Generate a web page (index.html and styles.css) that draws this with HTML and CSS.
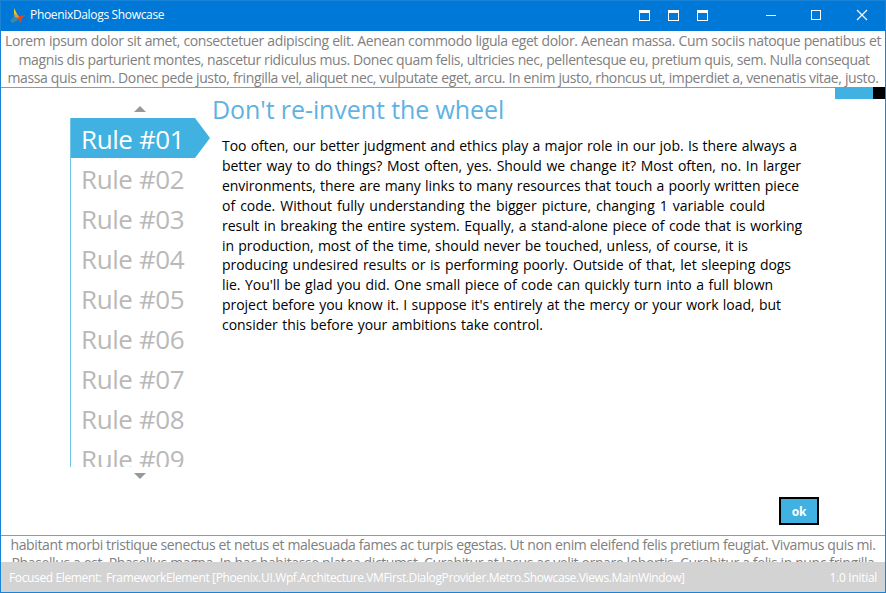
FILE: index.html
```html
<!DOCTYPE html>
<html lang="en">
<head>
<meta charset="utf-8">
<title>PhoenixDalogs Showcase</title>
<link rel="stylesheet" href="styles.css">
</head>
<body>
<div class="window">
  <header class="titlebar">
    <svg class="logo" width="18" height="18" viewBox="0 0 18 18">
      <path d="M5 1 L8 7 L9 10 L5 8 Z" fill="#f0cf2a"/>
      <path d="M7 8 L11 9 L17 8 L13 11 L12 16 L9 12 Z" fill="#e0452a"/>
      <path d="M5 7 L9 10 L8 14 L3 16 L1 13 L4 11 Z" fill="#4f8f96" opacity=".75"/>
      <path d="M5 6 L9 8 L10 11 L6 10 Z" fill="#d5a33a"/>
    </svg>
    <span class="title">PhoenixDalogs Showcase</span>
    <svg class="controls" width="250" height="30" viewBox="0 0 250 30" fill="none" stroke="#fff" shape-rendering="crispEdges">
      <path d="M3.500 9.500h10v10h-10zM32.500 9.500h10v10h-10zM61.500 9.500h10v10h-10z"/>
      <path d="M3 11h11M32 11h11M61 11h11" stroke-width="2"/>
      <path d="M130 14.500h10M175.500 9.500h9v9h-9z"/>
      <path d="M221 9l10 10M231 9l-10 10" shape-rendering="auto" stroke-width="1.200"/>
    </svg>
  </header>
  <div class="backdrop top">
    <p style="width:876px">Lorem ipsum dolor sit amet, consectetuer adipiscing elit. Aenean commodo ligula eget dolor. Aenean massa. Cum sociis natoque penatibus et</p>
    <p style="width:849px">magnis dis parturient montes, nascetur ridiculus mus. Donec quam felis, ultricies nec, pellentesque eu, pretium quis, sem. Nulla consequat</p>
    <p style="width:871px">massa quis enim. Donec pede justo, fringilla vel, aliquet nec, vulputate eget, arcu. In enim justo, rhoncus ut, imperdiet a, venenatis vitae, justo.</p>
  </div>
  <main class="dialog">
    <div class="progress"><i></i></div>
    <nav class="rules">
      <span class="arrow up"></span>
      <ul>
        <li class="active">Rule #01</li>
        <li>Rule #02</li>
        <li>Rule #03</li>
        <li>Rule #04</li>
        <li>Rule #05</li>
        <li>Rule #06</li>
        <li>Rule #07</li>
        <li>Rule #08</li>
        <li>Rule #09</li>
      </ul>
      <span class="arrow down"></span>
    </nav>
    <section class="content">
      <h1>Don't re-invent the wheel</h1>
      <div class="text">
        <p style="width:575px">Too often, our better judgment and ethics play a major role in our job. Is there always a</p>
        <p style="width:579px">better way to do things? Most often, yes. Should we change it? Most often, no. In larger</p>
        <p style="width:577px">environments, there are many links to many resources that touch a poorly written piece</p>
        <p style="width:543px">of code. Without fully understanding the bigger picture, changing 1 variable could</p>
        <p style="width:580px">result in breaking the entire system. Equally, a stand-alone piece of code that is working</p>
        <p style="width:526px">in production, most of the time, should never be touched, unless, of course, it is</p>
        <p style="width:569px">producing undesired results or is performing poorly. Outside of that, let sleeping dogs</p>
        <p style="width:551px">lie. You'll be glad you did. One small piece of code can quickly turn into a full blown</p>
        <p style="width:559px">project before you know it. I suppose it's entirely at the mercy or your work load, but</p>
        <p style="width:321px">consider this before your ambitions take control.</p>
      </div>
      <button class="ok">ok</button>
    </section>
  </main>
  <div class="backdrop bottom">
    <p style="width:865px">habitant morbi tristique senectus et netus et malesuada fames ac turpis egestas. Ut non enim eleifend felis pretium feugiat. Vivamus quis mi.</p>
    <p style="width:863px">Phasellus a est. Phasellus magna. In hac habitasse platea dictumst. Curabitur at lacus ac velit ornare lobortis. Curabitur a felis in nunc fringilla</p>
  </div>
  <footer class="status">
    <span class="label">Focused Element:</span>
    <span class="focus">FrameworkElement [Phoenix.UI.Wpf.Architecture.VMFirst.DialogProvider.Metro.Showcase.Views.MainWindow]</span>
    <span class="version">1.0 Initial</span>
  </footer>
</div>
</body>
</html>
```
FILE: styles.css
```css
* { box-sizing: border-box; }
body { margin: 0; font-family: "Open Sans", "Noto Sans", sans-serif; }
p, h1, ul { margin: 0; padding: 0; }
.window {
  width: 886px; height: 593px; overflow: hidden;
  display: flex; flex-direction: column;
  background: #fff; border: 1px solid #1883d7;
}
.titlebar {
  height: 30px; flex: none; display: flex; align-items: center;
  background: #0078d7; color: #fff; padding-left: 8px;
}
.logo { margin-right: 3px; }
.title { font-size: 12px; line-height: 16px; padding-bottom: 2px; letter-spacing: -0.33px; white-space: nowrap; }
.controls { margin-left: auto; margin-right: -1px; }
.backdrop {
  display: flex; flex-direction: column; align-items: center;
  color: #808080; font-size: 14px; letter-spacing: -0.38px;
  overflow: hidden; flex: none;
}
.backdrop p { line-height: 18.6px; white-space: nowrap; text-align-last: justify; }
.top { height: 56px; padding-top: 1px; }
.bottom { height: 26px; }
.bottom p { line-height: 18px; }
.dialog {
  flex: none; height: 449px; position: relative; display: flex;
  border-top: 1px solid #4db0e0; border-bottom: 1px solid #4db0e0;
}
.progress {
  position: absolute; top: -1px; right: 0; width: 50px; height: 12px;
  background: #41b1e1;
}
.progress i { display: block; width: 12px; height: 12px; margin-left: 38px; background: #000; }
.rules { width: 140px; margin-left: 69px; padding-top: 18px; flex: none; }
.arrow { display: block; width: 0; margin-left: 64px; border: 6px solid transparent; }
.up { border-top: 0; border-bottom-color: #999; }
.down { border-bottom: 0; border-top-color: #999; margin-top: 6px; }
.rules ul {
  list-style: none; height: 349px; overflow: hidden; margin-top: 6px;
  border-left: 1px solid #6fc4e8;
}
.rules li {
  height: 40px; line-height: 42px; padding-left: 10px; font-size: 26px;
  letter-spacing: -0.4px; color: #b9b9b9; white-space: nowrap;
}
.rules .active {
  color: #fff; background: #41b1e1;
  clip-path: polygon(0 0, 124px 0, 100% 50%, 124px 100%, 0 100%);
}
.content { flex: 1; padding-left: 2px; display: flex; flex-direction: column; }
h1 {
  height: 48px; line-height: 42px; font-size: 25px; font-weight: 400;
  letter-spacing: -0.09px; color: #5fb2e2;
}
.text { padding-left: 10px; font-size: 14px; letter-spacing: -0.04px; color: #000; }
.text p { line-height: 19.9px; white-space: nowrap; text-align-last: justify; }
.ok {
  width: 40px; height: 28px; margin: auto 66px 10px auto; padding: 0;
  border: 2px solid #000; background: #41b1e1; color: #fff;
  font: 700 12px "Open Sans", sans-serif; letter-spacing: -0.3px;
}
.status {
  height: 30px; flex: none; display: flex; align-items: center;
  padding: 0 8px; background: #d3d3d3; color: #fff;
  font-size: 12px; letter-spacing: -0.37px; white-space: nowrap;
}
.label { width: 97px; }
.version { margin-left: auto; letter-spacing: -0.3px; }
```
